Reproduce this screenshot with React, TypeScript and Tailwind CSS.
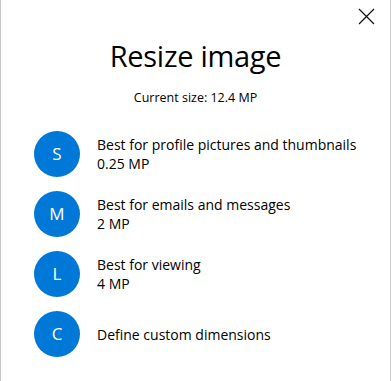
const options = [
  { letter: 'S', title: 'Best for profile pictures and thumbnails', size: '0.25 MP' },
  { letter: 'M', title: 'Best for emails and messages', size: '2 MP' },
  { letter: 'L', title: 'Best for viewing', size: '4 MP' },
  { letter: 'C', title: 'Define custom dimensions', size: '' },
];

export default function App() {
  return (
    <div
      className="w-[391px] h-[381px] bg-white border-x border-[#c8c8c8] text-black relative"
      style={{ fontFamily: '"Open Sans", "Noto Sans", sans-serif' }}
    >
      <button className="absolute left-[357px] top-[8px] w-[17px] h-[17px]">
        <svg width="17" height="17" viewBox="0 0 17 17" fill="none" stroke="#111" strokeWidth="1.2">
          <path d="M1 1 L16 16 M16 1 L1 16" />
        </svg>
      </button>

      <h1 className="pt-[36px] text-center text-[29px] leading-[40px] font-normal tracking-[-0.3px]">
        Resize image
      </h1>
      <p className="mt-[14px] text-center text-[12.5px] leading-[16px]">Current size: 12.4 MP</p>

      <div className="mt-[25px] pl-[33px] flex flex-col gap-[14px]">
        {options.map((o) => (
          <div key={o.letter} className="flex items-center gap-[17px]">
            <div className="w-[46px] h-[46px] rounded-full bg-[#0078d7] text-white flex items-center justify-center text-[17px]">
              {o.letter}
            </div>
            <div className="text-[14px] leading-[19px]">
              <div>{o.title}</div>
              {o.size && <div>{o.size}</div>}
            </div>
          </div>
        ))}
      </div>
    </div>
  );
}
